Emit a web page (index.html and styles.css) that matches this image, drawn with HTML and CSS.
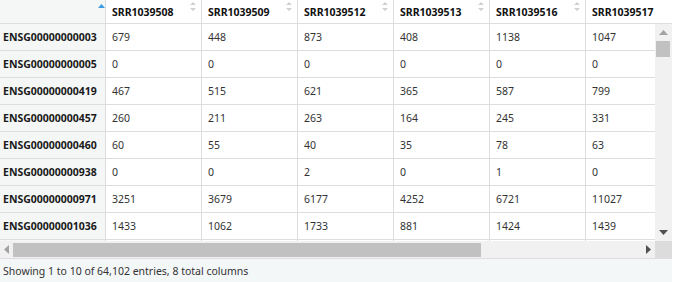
FILE: index.html
```html
<!DOCTYPE html>
<html>
<head>
<meta charset="utf-8">
<link rel="stylesheet" href="styles.css">
</head>
<body>
<div class="widget">
  <div class="head">
    <div class="head-clip">
      <div class="row hrow">
        <div class="cell rn hcell"><span class="txt"></span><svg class="sort" width="7" height="4" viewBox="0 0 7 4"><path d="M0 4 L3.5 0 L7 4 Z" fill="#3d9ce2"/></svg></div>
        <div class="cell hcell"><span class="txt">SRR1039508</span><svg class="sort2" width="6" height="9" viewBox="0 0 6 9"><path d="M0 3 L3 0 L6 3 Z M0 6 L3 9 L6 6 Z" fill="#cfcfcf"/></svg></div>
        <div class="cell hcell"><span class="txt">SRR1039509</span><svg class="sort2" width="6" height="9" viewBox="0 0 6 9"><path d="M0 3 L3 0 L6 3 Z M0 6 L3 9 L6 6 Z" fill="#cfcfcf"/></svg></div>
        <div class="cell hcell"><span class="txt">SRR1039512</span><svg class="sort2" width="6" height="9" viewBox="0 0 6 9"><path d="M0 3 L3 0 L6 3 Z M0 6 L3 9 L6 6 Z" fill="#cfcfcf"/></svg></div>
        <div class="cell hcell"><span class="txt">SRR1039513</span><svg class="sort2" width="6" height="9" viewBox="0 0 6 9"><path d="M0 3 L3 0 L6 3 Z M0 6 L3 9 L6 6 Z" fill="#cfcfcf"/></svg></div>
        <div class="cell hcell"><span class="txt">SRR1039516</span><svg class="sort2" width="6" height="9" viewBox="0 0 6 9"><path d="M0 3 L3 0 L6 3 Z M0 6 L3 9 L6 6 Z" fill="#cfcfcf"/></svg></div>
        <div class="cell hcell"><span class="txt">SRR1039517</span><svg class="sort2" width="6" height="9" viewBox="0 0 6 9"><path d="M0 3 L3 0 L6 3 Z M0 6 L3 9 L6 6 Z" fill="#cfcfcf"/></svg></div>
      </div>
    </div>
    <div class="head-gap"></div>
  </div>
  <div class="mid">
    <div class="body-clip">
      <div class="row"><div class="cell rn">ENSG00000000003</div><div class="cell">679</div><div class="cell">448</div><div class="cell">873</div><div class="cell">408</div><div class="cell">1138</div><div class="cell">1047</div></div>
      <div class="row"><div class="cell rn">ENSG00000000005</div><div class="cell">0</div><div class="cell">0</div><div class="cell">0</div><div class="cell">0</div><div class="cell">0</div><div class="cell">0</div></div>
      <div class="row"><div class="cell rn">ENSG00000000419</div><div class="cell">467</div><div class="cell">515</div><div class="cell">621</div><div class="cell">365</div><div class="cell">587</div><div class="cell">799</div></div>
      <div class="row"><div class="cell rn">ENSG00000000457</div><div class="cell">260</div><div class="cell">211</div><div class="cell">263</div><div class="cell">164</div><div class="cell">245</div><div class="cell">331</div></div>
      <div class="row"><div class="cell rn">ENSG00000000460</div><div class="cell">60</div><div class="cell">55</div><div class="cell">40</div><div class="cell">35</div><div class="cell">78</div><div class="cell">63</div></div>
      <div class="row"><div class="cell rn">ENSG00000000938</div><div class="cell">0</div><div class="cell">0</div><div class="cell">2</div><div class="cell">0</div><div class="cell">1</div><div class="cell">0</div></div>
      <div class="row"><div class="cell rn">ENSG00000000971</div><div class="cell">3251</div><div class="cell">3679</div><div class="cell">6177</div><div class="cell">4252</div><div class="cell">6721</div><div class="cell">11027</div></div>
      <div class="row"><div class="cell rn">ENSG00000001036</div><div class="cell">1433</div><div class="cell">1062</div><div class="cell">1733</div><div class="cell">881</div><div class="cell">1424</div><div class="cell">1439</div></div>
      <div class="row"><div class="cell rn"></div><div class="cell"></div><div class="cell"></div><div class="cell"></div><div class="cell"></div><div class="cell"></div><div class="cell"></div></div>
    </div>
    <div class="vbar">
      <div class="vbtn"><svg width="9" height="5" viewBox="0 0 9 5"><path d="M0 5 L4.5 0 L9 5 Z" fill="#a3a3a3"/></svg></div>
      <div class="vtrack"><div class="vthumb"></div></div>
      <div class="vbtn"><svg width="9" height="5" viewBox="0 0 9 5"><path d="M0 0 L4.5 5 L9 0 Z" fill="#505050"/></svg></div>
    </div>
  </div>
  <div class="hrow-bar">
    <div class="hbar">
      <div class="hbtn"><svg width="5" height="9" viewBox="0 0 5 9"><path d="M5 0 L0 4.5 L5 9 Z" fill="#a3a3a3"/></svg></div>
      <div class="htrack"><div class="hthumb"></div></div>
      <div class="hbtn"><svg width="5" height="9" viewBox="0 0 5 9"><path d="M0 0 L5 4.5 L0 9 Z" fill="#505050"/></svg></div>
    </div>
    <div class="corner"></div>
  </div>
  <div class="foot">Showing 1 to 10 of 64,102 entries, 8 total columns</div>
</div>
</body>
</html>
```

FILE: styles.css
```css
html, body {
  margin: 0;
  padding: 0;
  background: #ffffff;
}
.widget {
  width: 672px;
  font-family: "Noto Sans", "Open Sans", sans-serif;
  font-size: 10.5px;
  color: #333333;
}
.head {
  display: flex;
  height: 24px;
}
.head-clip {
  width: 655px;
  overflow: hidden;
}
.head-gap {
  width: 17px;
  background: #ffffff;
  border-bottom: 1px solid #dddddd;
  box-sizing: border-box;
}
.row {
  display: grid;
  grid-template-columns: 106px repeat(6, 96px);
  height: 27px;
  width: max-content;
}
.hrow {
  height: 24px;
}
.cell {
  box-sizing: border-box;
  border-right: 1px solid #dddddd;
  border-bottom: 1px solid #dddddd;
  padding: 0 6px;
  display: flex;
  align-items: center;
  white-space: nowrap;
  overflow: hidden;
  background: #ffffff;
}
.hcell {
  font-weight: bold;
  color: #111111;
  justify-content: space-between;
  padding-right: 4px;
}
.rn {
  background: #f5f7f7;
  font-weight: bold;
  color: #1a1a1a;
  padding-left: 3px;
  padding-right: 0;
}
.sort {
  align-self: flex-start;
  margin-top: 4px;
}
.sort2 {
  align-self: flex-start;
  margin-top: 2px;
  margin-right: 1px;
  flex: none;
}
.mid {
  display: flex;
  height: 217px;
}
.body-clip {
  width: 655px;
  height: 217px;
  overflow: hidden;
}
.vbar {
  width: 17px;
  background: #f1f1f1;
  display: flex;
  flex-direction: column;
}
.vbtn {
  height: 17px;
  display: flex;
  align-items: center;
  justify-content: center;
}
.vtrack {
  flex: 1;
  padding: 0 2px 0 1px;
}
.vthumb {
  height: 16px;
  background: #c1c1c1;
}
.hrow-bar {
  display: flex;
  height: 17px;
}
.hbar {
  width: 655px;
  background: #f1f1f1;
  display: flex;
}
.hbtn {
  width: 13px;
  display: flex;
  align-items: center;
  justify-content: center;
}
.htrack {
  flex: 1;
  padding: 2px 0 1px 0;
}
.hthumb {
  width: 468px;
  height: 14px;
  background: #c1c1c1;
}
.corner {
  width: 17px;
  background: #dcdcdc;
}
.foot {
  box-sizing: border-box;
  height: 24px;
  border-top: 1px solid #dddddd;
  background: #f4f7f7;
  padding: 0 3px;
  display: flex;
  align-items: center;
  color: #333333;
}
```
